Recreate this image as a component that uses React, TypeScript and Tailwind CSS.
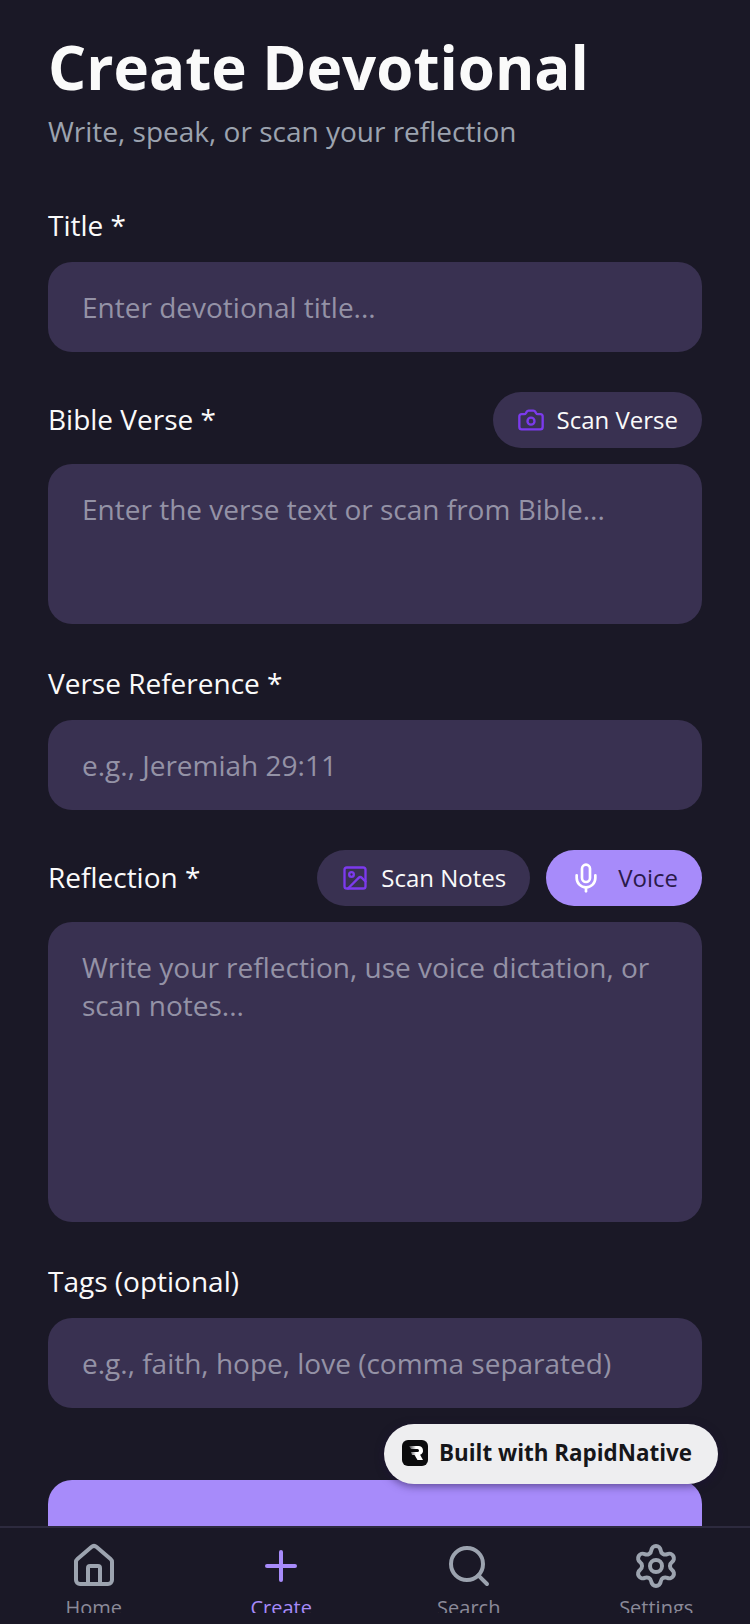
import { Camera, House, Image, Mic, Plus, Search, Settings } from "lucide-react"
import type { ReactNode } from "react"

const fieldClass = "rounded-3xl bg-[#393151] px-[34px] text-[28px] leading-[38px] text-[#9492a6]"

function Label({ children }: { children: ReactNode }) {
  return <p className="pb-0.5 text-[28px] leading-[40px] text-[#fafafa]">{children}</p>
}

function ScanPill({ icon, children }: { icon: ReactNode; children: ReactNode }) {
  return (
    <button className="flex h-14 items-center gap-3 rounded-full bg-[#393151] pl-6 pr-6 text-[24px] text-[#fafafa]">
      {icon}
      {children}
    </button>
  )
}

const tabs = [
  { label: "Home", icon: House, active: false },
  { label: "Create", icon: Plus, active: true },
  { label: "Search", icon: Search, active: false },
  { label: "Settings", icon: Settings, active: false },
]

export default function App() {
  return (
    <div className="relative flex h-[1624px] w-[750px] flex-col overflow-hidden bg-[#1a1826] font-['Open_Sans',sans-serif]">
      <main className="min-h-0 flex-1 overflow-hidden px-12 pt-[31px]">
        <h1 className="text-[60px] leading-[72px] font-bold text-[#fafafa]">Create Devotional</h1>
        <p className="mt-2 text-[28px] leading-[40px] text-[#9ca3af]">Write, speak, or scan your reflection</p>

        <section className="mt-[54px]">
          <Label>Title *</Label>
          <div className={`mt-[15px] flex h-[90px] items-center ${fieldClass}`}>Enter devotional title...</div>
        </section>

        <section className="mt-10">
          <div className="flex items-center justify-between">
            <Label>Bible Verse *</Label>
            <ScanPill icon={<Camera className="h-7 w-7 text-[#7c3aed]" />}>Scan Verse</ScanPill>
          </div>
          <div className={`mt-4 h-40 pt-[26px] ${fieldClass}`}>Enter the verse text or scan from Bible...</div>
        </section>

        <section className="mt-[39px]">
          <Label>Verse Reference *</Label>
          <div className={`mt-[15px] flex h-[90px] items-center ${fieldClass}`}>e.g., Jeremiah 29:11</div>
        </section>

        <section className="mt-10">
          <div className="flex items-center justify-between">
            <Label>Reflection *</Label>
            <div className="flex gap-4">
              <ScanPill icon={<Image className="h-7 w-7 text-[#7c3aed]" />}>Scan Notes</ScanPill>
              <button className="flex h-14 items-center gap-4 rounded-full bg-[#a78bfa] pl-6 pr-6 text-[24px] text-[#2a1a4a]">
                <Mic className="h-8 w-8 text-white" />
                Voice
              </button>
            </div>
          </div>
          <div className={`mt-4 h-[300px] pt-[26px] ${fieldClass}`}>
            Write your reflection, use voice dictation, or scan notes...
          </div>
        </section>

        <section className="mt-[39px]">
          <Label>Tags (optional)</Label>
          <div className={`mt-[15px] flex h-[90px] items-center ${fieldClass}`}>e.g., faith, hope, love (comma separated)</div>
        </section>

        <div className="mt-[72px] h-28 rounded-3xl bg-[#a78bfa]" />
      </main>

      <nav className="flex h-[98px] shrink-0 border-t-2 border-[#2d2a3e] bg-[#1a1826] pt-[14px]">
        {tabs.map(({ label, icon: Icon, active }) => (
          <div key={label} className="flex h-[71px] flex-1 flex-col items-center overflow-hidden">
            <Icon className={`h-12 w-12 shrink-0 ${active ? "text-[#a78bfa]" : "text-[#9ca3af]"}`} />
            <span className={`mt-1 text-[20px] leading-[28px] ${active ? "text-[#a78bfa]" : "text-[#8b8a99]"}`}>
              {label}
            </span>
          </div>
        ))}
      </nav>

      <div className="absolute top-[1424px] left-[384px] flex h-[60px] w-[334px] items-center gap-[11px] rounded-full bg-[#eeeef0] pb-0.5 pl-[18px] shadow-[0_2px_8px_rgba(30,15,60,0.55)]">
        <svg width="26" height="26" viewBox="0 0 26 26">
          <defs>
            <linearGradient id="rapid-r" x1="0" y1="0" x2="1" y2="0">
              <stop offset="0" stopColor="#3a3a3e" />
              <stop offset="0.5" stopColor="#ffffff" />
            </linearGradient>
          </defs>
          <rect width="26" height="26" rx="6" fill="#0b0b0d" />
          <path d="M7 6h9.5a4.5 4.5 0 0 1 1.6 8.7L21 20h-5.5l-3-5H10l-1-3h6.5a1.5 1.5 0 0 0 0-3H9z" fill="url(#rapid-r)" />
        </svg>
        <span className="text-[22.4px] font-bold text-[#16161a]">Built with RapidNative</span>
      </div>
    </div>
  )
}
